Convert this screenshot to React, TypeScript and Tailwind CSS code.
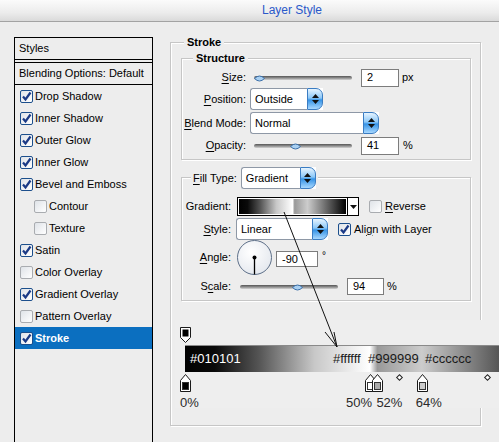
import React from "react";

const styleItems = [
  { name: "Drop Shadow", on: true },
  { name: "Inner Shadow", on: true },
  { name: "Outer Glow", on: true },
  { name: "Inner Glow", on: true },
  { name: "Bevel and Emboss", on: true },
  { name: "Contour", sub: true },
  { name: "Texture", sub: true },
  { name: "Satin", on: true },
  { name: "Color Overlay" },
  { name: "Gradient Overlay", on: true },
  { name: "Pattern Overlay" },
  { name: "Stroke", on: true, active: true },
];

// colour stops of the edited gradient, pos in percent
const stops = [
  { pos: 0, color: "#010101", label: "0%", labelX: -5 },
  { pos: 50, color: "#ffffff", label: "50%", labelX: -24 },
  { pos: 52, color: "#aaaaaa", label: "52%", labelX: -1 },
  { pos: 64, color: "#cccccc", label: "64%", labelX: -6 },
];
const midpoints = [58, 82];
const barTags = [
  { text: "#010101", x: 5, light: true },
  { text: "#ffffff", x: 148 },
  { text: "#999999", x: 183 },
  { text: "#cccccc", x: 240 },
];

const gradientCss =
  "bg-[linear-gradient(to_right,#010101_0%,#0a0a0a_8%,#555555_20%,#c8c8c8_35%,#ffffff_50%,#999999_52%,#cccccc_64%,#000000_100%)]";

function Check({ on }: { on?: boolean }) {
  return (
    <span
      className={`relative flex h-[13px] w-[13px] shrink-0 items-center justify-center rounded-[2px] border bg-[linear-gradient(135deg,#dfe3e8,#ffffff)] ${
        on ? "border-[#1c4f8c]" : "border-[#a9acb0]"
      }`}
    >
      {on && (
        <svg width="11" height="11" viewBox="0 0 11 11">
          <path d="M2 5.5 L4.5 8.5 L9.5 1.5" fill="none" stroke="#1b3a86" strokeWidth="2.2" />
        </svg>
      )}
    </span>
  );
}

function Spinner() {
  return (
    <span className="flex h-full w-[16px] shrink-0 flex-col items-center justify-center gap-[2px] rounded-r-[7px] border border-[#3a7cc2] bg-[linear-gradient(to_bottom,#e6f4ff,#8cc8f8_45%,#3593e6_55%,#a8d8ff)]">
      <svg width="7" height="4" viewBox="0 0 7 4">
        <path d="M0 4 L3.5 0 L7 4 Z" fill="#111" />
      </svg>
      <svg width="7" height="4" viewBox="0 0 7 4">
        <path d="M0 0 L3.5 4 L7 0 Z" fill="#111" />
      </svg>
    </span>
  );
}

function Select({ value, className }: { value: string; className: string }) {
  return (
    <div className={`flex h-[22px] shrink-0 rounded-l-[3px] bg-white ${className}`}>
      <div className="flex flex-1 items-center rounded-l-[3px] border border-r-0 border-[#8e98a6] pl-[4px] text-[11px]">
        {value}
      </div>
      <Spinner />
    </div>
  );
}

function NumBox({ value, className }: { value: string; className: string }) {
  return (
    <div className={`flex shrink-0 items-center border border-[#7c7c7c] bg-white pl-[5px] ${className}`}>
      {value}
    </div>
  );
}

function Slider({ className, thumb }: { className: string; thumb: string }) {
  return (
    <div className={`relative flex h-[10px] shrink-0 items-center ${className}`}>
      <div className="h-[4px] w-full rounded-full bg-[linear-gradient(to_bottom,#555,#8e8e8e_50%,#d4d4d4)]" />
      <svg className={`absolute top-[2px] ${thumb}`} width="11" height="7" viewBox="0 0 11 7">
        <path d="M0.5 3.5 Q5.5 -1.5 10.5 3.5 Q5.5 8.5 0.5 3.5 Z" fill="#a9d0f2" stroke="#3e71aa" />
      </svg>
    </div>
  );
}

function Label({ children, className }: { children: React.ReactNode; className: string }) {
  return <div className={`shrink-0 text-right ${className}`}>{children}</div>;
}

function Key({ c }: { c: string }) {
  return <span className="underline underline-offset-[2px]">{c}</span>;
}

function StylesList() {
  return (
    <div className="ml-[14px] mt-[15px] h-[420px] w-[139px] shrink-0 border border-black">
      <div className="flex h-[22px] items-center border-b border-black pl-[4px]">Styles</div>
      <div className="mt-[2px] flex h-[23px] items-center border-y border-black pl-[4px]">
        Blending Options: Default
      </div>
      {styleItems.map((s) => (
        <div
          key={s.name}
          className={`flex h-[22px] items-center gap-[1px] ${s.sub ? "pl-[19px]" : "pl-[5px]"} ${
            s.active ? "bg-[#0b6fc0] font-bold text-white" : ""
          }`}
        >
          <Check on={s.on} />
          <span className="ml-[1px]">{s.name}</span>
        </div>
      ))}
    </div>
  );
}

const etched = "border border-[#c6c6c6] shadow-[1px_1px_0_#ffffff,inset_1px_1px_0_#ffffff]";

function StrokePanel() {
  return (
    <div className={`relative ml-[17px] mt-[20px] h-[384px] w-[311px] shrink-0 ${etched}`}>
      <span className="absolute -top-[8px] left-[13px] bg-[#ededed] px-[3px] font-bold leading-[14px]">
        Stroke
      </span>

      {/* Structure group */}
      <div className={`relative ml-[10px] mt-[15px] h-[102px] w-[290px] ${etched}`}>
        <span className="absolute -top-[8px] left-[11px] bg-[#ededed] px-[3px] font-bold leading-[14px]">
          Structure
        </span>
        <div className="mt-[9px] flex h-[19px] items-center">
          <Label className="w-[64px]">
            <Key c="S" />ize:
          </Label>
          <Slider className="ml-[8px] w-[98px]" thumb="left-[0px]" />
          <NumBox value="2" className="ml-[9px] h-[18px] w-[38px]" />
          <span className="ml-[3px]">px</span>
        </div>
        <div className="mt-[1px] flex h-[22px] items-center">
          <Label className="w-[64px]">
            <Key c="P" />osition:
          </Label>
          <Select value="Outside" className="ml-[4px] w-[73px]" />
        </div>
        <div className="mt-[2px] flex h-[22px] items-center">
          <Label className="w-[64px]">
            <Key c="B" />lend Mode:
          </Label>
          <Select value="Normal" className="ml-[4px] w-[129px]" />
        </div>
        <div className="mt-[2px] flex h-[19px] items-center">
          <Label className="w-[64px]">
            <Key c="O" />pacity:
          </Label>
          <Slider className="ml-[8px] w-[98px]" thumb="left-[36px]" />
          <NumBox value="41" className="ml-[9px] h-[18px] w-[38px]" />
          <span className="ml-[4px]">%</span>
        </div>
      </div>

      {/* Fill group */}
      <div className={`relative ml-[10px] mt-[17px] h-[124px] w-[290px] ${etched}`}>
        <div className="absolute -top-[11px] left-[9px] flex h-[22px] items-center bg-[#ededed] px-[2px]">
          <span>
            <Key c="F" />ill Type:
          </span>
          <Select value="Gradient" className="ml-[4px] w-[75px]" />
        </div>

        <div className="mt-[19px] flex h-[19px] items-center">
          <Label className="w-[49px]">Gradient:</Label>
          <div className="ml-[6px] flex h-[19px]">
            <div className="h-full w-[111px] border border-black bg-white p-[1px]">
              <div className={`h-full w-full ${gradientCss}`} />
            </div>
            <div className="flex h-full w-[11px] items-center justify-center border border-l-0 border-black bg-white">
              <svg width="7" height="4" viewBox="0 0 7 4">
                <path d="M0 0 L3.5 4 L7 0 Z" fill="#111" />
              </svg>
            </div>
          </div>
          <span className="ml-[10px]">
            <Check />
          </span>
          <span className="ml-[3px]">
            <Key c="R" />everse
          </span>
        </div>

        <div className="mt-[2px] flex h-[22px] items-center">
          <Label className="w-[49px]">
            <Key c="S" />tyle:
          </Label>
          <Select value="Linear" className="ml-[5px] w-[92px]" />
          <span className="ml-[10px]">
            <Check on />
          </span>
          <span className="ml-[3px]">
            Ali<Key c="g" />n with Layer
          </span>
        </div>

        <div className="flex h-[35px] items-start">
          <Label className="mt-[11px] w-[49px] leading-[13px]">
            <Key c="A" />ngle:
          </Label>
          <div className="ml-[6px] h-[35px] w-[35px] shrink-0">
            <svg width="35" height="35" viewBox="0 0 35 35">
              <defs>
                <radialGradient id="dial" cx="40%" cy="35%" r="70%">
                  <stop offset="0%" stopColor="#ffffff" />
                  <stop offset="100%" stopColor="#e4e8ee" />
                </radialGradient>
              </defs>
              <circle cx="17.5" cy="17.5" r="17" fill="url(#dial)" stroke="#5d6f88" />
              <line x1="17.5" y1="17.5" x2="17.5" y2="34.5" stroke="#000" strokeWidth="1.3" />
              <circle cx="17.5" cy="17.5" r="2" fill="#000" />
            </svg>
          </div>
          <NumBox value="-90" className="ml-[4px] mt-[11px] h-[16px] w-[42px]" />
          <span className="ml-[4px] mt-[9px] text-[10px]">°</span>
        </div>

        <div className="mt-[3px] flex h-[17px] items-center">
          <Label className="w-[49px]">
            S<Key c="c" />ale:
          </Label>
          <Slider className="ml-[9px] w-[98px]" thumb="left-[52px]" />
          <NumBox value="94" className="ml-[9px] h-[17px] w-[37px]" />
          <span className="ml-[3px]">%</span>
        </div>
      </div>
    </div>
  );
}

function ColorStop({ color }: { color: string }) {
  return (
    <svg width="11" height="18" viewBox="0 0 11 18">
      <path d="M0.5 6.5 L5.5 0.5 L10.5 6.5 L10.5 17.5 L0.5 17.5 Z" fill="#fff" stroke="#1a1a1a" />
      <rect x="2.5" y="8.5" width="6" height="7" fill={color} stroke="#333" />
    </svg>
  );
}

function GradientStrip() {
  // 0% sits at x=10 of the strip, 100% at x=380 (past the visible edge)
  const at = (pct: number) => 10 + pct * 3.7;
  return (
    <div className="absolute left-[175px] top-[320px] h-[88px] w-[324px] bg-[#eeeeee] font-['Liberation_Sans',Arial,sans-serif]">
      {/* opacity stop */}
      <div className="ml-[5px] mt-[7px] h-[16px] w-[11px]">
        <svg width="11" height="16" viewBox="0 0 11 16">
          <path d="M0.5 0.5 L10.5 0.5 L10.5 10.5 L5.5 15.5 L0.5 10.5 Z" fill="#fff" stroke="#1a1a1a" />
          <rect x="2.5" y="2.5" width="6" height="7" fill="#000" />
        </svg>
      </div>

      <div className="relative ml-[10px] mt-[2px] h-[27px] w-[314px] overflow-hidden border-t border-[#8a8a8a]">
        <div className={`h-full w-[370px] ${gradientCss}`} />
        {barTags.map((t) => (
          <span
            key={t.text}
            className={`absolute top-[6px] text-[13px] leading-[14px] ${t.light ? "text-white" : "text-[#1a1a1a]"}`}
            style={{ left: t.x }}
          >
            {t.text}
          </span>
        ))}
      </div>

      <div className="relative mt-[2px] h-[18px]">
        {stops.map((s) => (
          <div key={s.pos} className="absolute top-0" style={{ left: at(s.pos) - 5 }}>
            <ColorStop color={s.color} />
          </div>
        ))}
        {midpoints.map((m) => (
          <div
            key={m}
            className="absolute top-[1px] h-[5px] w-[5px] rotate-45 border border-[#222] bg-white"
            style={{ left: at(m) - 3 }}
          />
        ))}
      </div>

      <div className="relative mt-[4px] h-[14px]">
        {stops.map((s) => (
          <span
            key={s.pos}
            className="absolute top-0 text-[13px] leading-[14px] text-[#2a2a2a]"
            style={{ left: at(s.pos) + s.labelX }}
          >
            {s.label}
          </span>
        ))}
      </div>
    </div>
  );
}

function Pointer() {
  return (
    <svg className="pointer-events-none absolute left-0 top-0" width="499" height="442" viewBox="0 0 499 442">
      <line x1="284" y1="212" x2="337" y2="347" stroke="#111" strokeWidth="1" />
      <path d="M325 332 L337 347 L334 332" fill="none" stroke="#111" strokeWidth="1" />
    </svg>
  );
}

export default function App() {
  return (
    <div className="relative h-[442px] w-[499px] overflow-hidden bg-[#ededed] font-['Liberation_Sans',Arial,sans-serif] text-[11px] leading-[13px] text-black">
      <div className="h-[22px] border-b border-[#a3a3a3] bg-[linear-gradient(to_bottom,#fbfbfb,#ececec_60%,#dadada)] pl-[262px] text-[12px] leading-[21px] text-[#2a58c9]">
        Layer Style
      </div>
      <div className="flex items-start">
        <StylesList />
        <StrokePanel />
      </div>
      <GradientStrip />
      <Pointer />
    </div>
  );
}
